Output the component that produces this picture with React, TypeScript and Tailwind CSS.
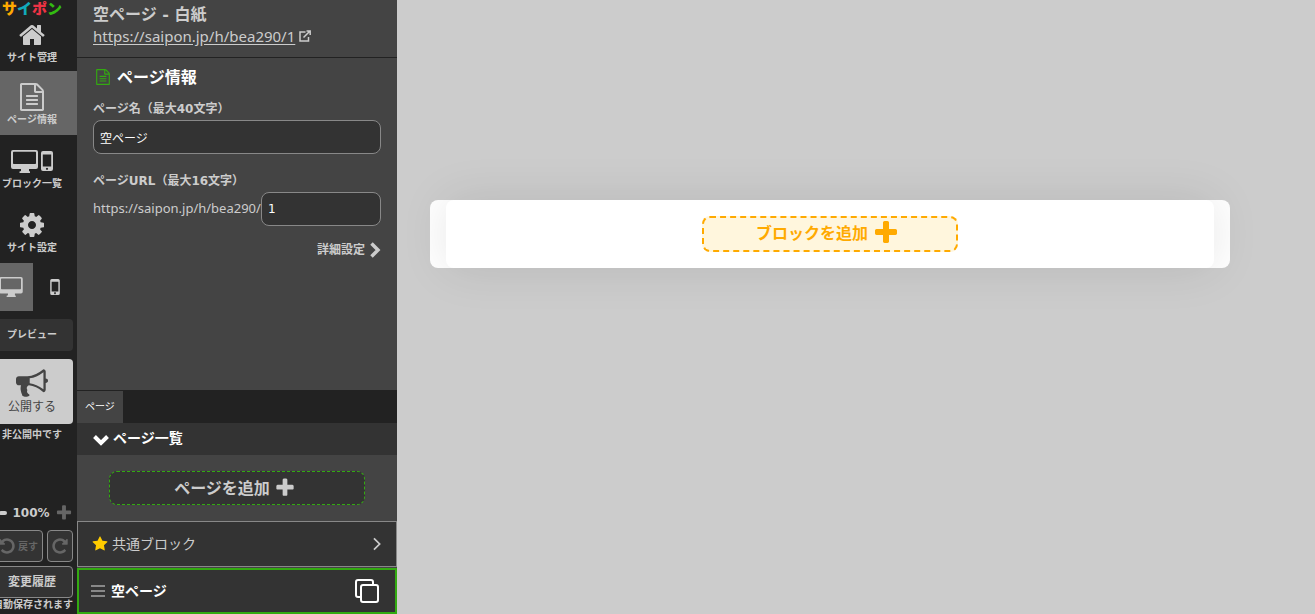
import { useState, type ReactNode } from "react";

const paths = {
  home: "M1472 992v480q0 26-19 45t-45 19h-384v-384h-256v384h-384q-26 0-45-19t-19-45v-480q0-1 .5-3t.5-3l575-474 575 474q1 2 1 6zm223-69l-62 74q-8 9-21 11h-3q-13 0-21-7l-692-577-692 577q-12 8-24 7-13-2-21-11l-62-74q-8-10-7-23.5t11-21.5l719-599q32-26 76-26t76 26l244 204v-195q0-14 9-23t23-9h192q14 0 23 9t9 23v408l219 182q10 8 11 21.5t-7 23.5z",
  file: "M1596 380q28 28 48 76t20 88v1152q0 40-28 68t-68 28h-1344q-40 0-68-28t-28-68v-1600q0-40 28-68t68-28h896q40 0 88 20t76 48zm-444-244v376h376q-10-29-22-41l-313-313q-12-12-41-22zm384 1528v-1024h-416q-40 0-68-28t-28-68v-416h-768v1536h1280zm-1024-864q0-14 9-23t23-9h704q14 0 23 9t9 23v64q0 14-9 23t-23 9h-704q-14 0-23-9t-9-23v-64zm736 224q14 0 23 9t9 23v64q0 14-9 23t-23 9h-704q-14 0-23-9t-9-23v-64q0-14 9-23t23-9h704zm0 256q14 0 23 9t9 23v64q0 14-9 23t-23 9h-704q-14 0-23-9t-9-23v-64q0-14 9-23t23-9h704z",
  cog: "M1152 896q0-106-75-181t-181-75-181 75-75 181 75 181 181 75 181-75 75-181zm512-109v222q0 12-8 23t-20 13l-185 28q-19 54-39 91 35 50 107 138 10 12 10 25t-9 23q-27 37-99 108t-94 71q-12 0-26-9l-138-108q-44 23-91 38-16 136-29 186-7 28-36 28h-222q-14 0-24.5-8.5t-11.5-21.5l-28-184q-49-16-90-37l-141 107q-10 9-25 9-14 0-25-11-126-114-165-168-7-10-7-23 0-12 8-23 15-21 51-66.5t54-70.5q-27-50-41-99l-183-27q-13-2-21-12.5t-8-23.5v-222q0-12 8-23t19-13l186-28q14-46 39-92-40-57-107-138-10-12-10-24 0-10 9-23 26-36 98.5-107.5t94.5-71.5q13 0 26 10l138 107q44-23 91-38 16-136 29-186 7-28 36-28h222q14 0 24.5 8.5t11.5 21.5l28 184q49 16 90 37l142-107q9-9 24-9 13 0 25 10 129 119 165 170 7 8 7 22 0 12-8 23-15 21-51 66.5t-54 70.5q26 50 41 98l183 28q13 2 21 12.5t8 23.5z",
  horn: "M1664 640q53 0 90.5 37.5t37.5 90.5-37.5 90.5-90.5 37.5v384q0 52-38 90t-90 38q-417-347-812-380-58 19-91 66t-31 100.5 40 92.5q-20 33-23 65.5t6 58 33.5 55 48 50 61.5 50.5q-29 58-111.5 83t-168.5 11.5-132-55.5q-7-23-29.5-87.5t-32-94.5-23-89-15-101 3.5-98.5 22-110.5h-122q-66 0-113-47t-47-113v-192q0-66 47-113t113-47h480q435 0 896-384 52 0 90 38t38 90v384zm-128 604v-954q-394 302-768 343v270q377 42 768 341z",
  plus: "M1600 736v192q0 40-28 68t-68 28h-416v416q0 40-28 68t-68 28h-192q-40 0-68-28t-28-68v-416h-416q-40 0-68-28t-28-68v-192q0-40 28-68t68-28h416v-416q0-40 28-68t68-28h192q40 0 68 28t28 68v416h416q40 0 68 28t28 68z",
  redo: "M1664 256v448q0 26-19 45t-45 19h-448q-42 0-59-40-17-39 14-69l138-138q-148-137-349-137-104 0-198.5 40.5t-163.5 109.5-109.5 163.5-40.5 198.5 40.5 198.5 109.5 163.5 163.5 109.5 198.5 40.5q119 0 225-52t179-147q7-10 23-12 15 0 25 9l137 138q9 8 9.5 20.5t-7.5 22.5q-109 132-264 204.5t-327 72.5q-156 0-298-61t-245-164-164-245-61-298 61-298 164-245 245-164 298-61q147 0 284.5 55.5t244.5 156.5l130-129q29-31 70-14 39 17 39 59z",
  star: "M1728 647q0 22-26 48l-363 354 86 500q1 7 1 20 0 21-10.5 35.5t-30.5 14.5q-19 0-40-12l-449-236-449 236q-22 12-40 12-21 0-31.5-14.5t-10.5-35.5q0-6 2-20l86-500-364-354q-25-27-25-48 0-37 56-46l502-73 225-455q19-41 49-41t49 41l225 455 502 73q56 9 56 46z",
};

function Icon({ name, className }: { name: keyof typeof paths; className: string }) {
  return (
    <svg viewBox="0 0 1792 1792" fill="currentColor" aria-hidden="true" className={`shrink-0 ${className}`}>
      <path d={paths[name]} />
    </svg>
  );
}

function Monitor({ className }: { className: string }) {
  return (
    <svg viewBox="0 0 27 23" fill="currentColor" aria-hidden="true" className={`shrink-0 ${className}`}>
      <path
        fillRule="evenodd"
        d="M2 0h23a2 2 0 0 1 2 2v15a2 2 0 0 1-2 2h-7v2l1 .5V23H8.500v-1.500L10 21v-2H2a2 2 0 0 1-2-2V2a2 2 0 0 1 2-2zM2.700 1.800a1 1 0 0 0-.7.8V13q0 1 .7 1h21.600q.7 0 .7-1V2.600q0-.8-.7-.8z"
      />
    </svg>
  );
}

function Phone({ className }: { className: string }) {
  return (
    <svg viewBox="0 0 12 20" fill="currentColor" aria-hidden="true" className={`shrink-0 ${className}`}>
      <path
        fillRule="evenodd"
        d="M2 0h8a2 2 0 0 1 2 2v16a2 2 0 0 1-2 2H2a2 2 0 0 1-2-2V2a2 2 0 0 1 2-2zM1.800 3.500v12h8.400v-12zM6 16.700a1.100 1.100 0 1 0 .01 0z"
      />
    </svg>
  );
}

function Chevron({ className, width }: { className: string; width: number }) {
  return (
    <svg viewBox="0 0 10 16" fill="none" stroke="currentColor" strokeWidth={width} aria-hidden="true" className={`shrink-0 ${className}`}>
      <path d="M1.500 1.500 8 8l-6.500 6.500" />
    </svg>
  );
}

function NavItem({ label, icon, active, first }: { label: string; icon: ReactNode; active?: boolean; first?: boolean }) {
  return (
    <button
      type="button"
      className={`flex w-full flex-col items-center pr-1 text-[10px] leading-4 font-bold ${first ? "h-14 pt-1.5" : "h-16 pt-3"} ${active ? "bg-[#666]" : ""}`}
    >
      <span className="flex h-7 items-center justify-center gap-[3px]">{icon}</span>
      {label}
    </button>
  );
}

function Sidebar() {
  return (
    <aside className="w-[77px] shrink-0 overflow-hidden bg-[#222]">
      <div className="-ml-[9px] flex h-full flex-col">
        <div className="flex h-[15px] justify-center pr-1 text-[15px] leading-4 font-black">
          <span className="text-[#fa0]">サ</span>
          <span className="text-[#1ab]">イ</span>
          <span className="text-[#e34]">ポ</span>
          <span className="text-[#3b1]">ン</span>
        </div>
        <nav>
          <NavItem first label="サイト管理" icon={<Icon name="home" className="size-7" />} />
          <NavItem active label="ページ情報" icon={<Icon name="file" className="size-7" />} />
          <NavItem
            label="ブロック一覧"
            icon={
              <>
                <Monitor className="h-[23px] w-[27px]" />
                <Phone className="h-5 w-3" />
              </>
            }
          />
          <NavItem label="サイト設定" icon={<Icon name="cog" className="size-7" />} />
        </nav>
        <div className="flex h-12">
          <button type="button" aria-label="パソコン表示" className="flex w-[42px] items-center bg-[#666] pl-2">
            <Monitor className="h-5 w-6" />
          </button>
          <button type="button" aria-label="スマホ表示" className="flex flex-1 items-center justify-center">
            <Phone className="h-4 w-2.5" />
          </button>
        </div>
        <button type="button" className="mt-2 mr-1 h-8 rounded bg-[#333] pb-0.5 text-[10px] font-bold">
          プレビュー
        </button>
        <button type="button" className="mt-2 mr-1 flex h-[65px] flex-col items-center rounded bg-[#ccc] pt-2 text-xs leading-4 text-[#444]">
          <Icon name="horn" className="size-8" />
          公開する
        </button>
        <p className="mr-1 text-center text-[10px] leading-5 font-bold">非公開中です</p>

        <div className="mt-auto mr-1 mb-2 flex h-[18px] items-center justify-between pl-2">
          <button type="button" aria-label="縮小" className="h-1 w-2 rounded-xs bg-[#ccc]" />
          <span className="font-['DejaVu_Sans',sans-serif] text-xs font-bold">100%</span>
          <button type="button" aria-label="拡大" className="text-[#666]">
            <Icon name="plus" className="size-[18px]" />
          </button>
        </div>
        <div className="mr-1 flex h-8 gap-1 text-[#666]">
          <button type="button" className="flex flex-1 items-center justify-end gap-0.5 rounded border border-[#888] bg-[#333] pr-1 text-[10px] font-bold">
            <Icon name="redo" className="size-[18px] -scale-x-100" />
            戻す
          </button>
          <button type="button" aria-label="やり直す" className="flex w-[26px] items-center justify-center rounded border border-[#888] bg-[#333]">
            <Icon name="redo" className="size-[18px]" />
          </button>
        </div>
        <button type="button" className="mt-1 mr-1 h-8 rounded border border-[#888] bg-[#333] text-xs font-bold">
          変更履歴
        </button>
        <p className="mr-1 mb-1 text-right text-[10px] leading-3 font-bold whitespace-nowrap">自動保存されます</p>
      </div>
    </aside>
  );
}

const field = "h-[34px] min-w-0 rounded-lg border border-[#888] bg-[#333] px-1.5 text-xs text-white outline-none";
const wide = "font-['DejaVu_Sans','Noto_Sans_CJK_JP',sans-serif]";

function PageInfo() {
  const [name, setName] = useState("空ページ");
  const [slug, setSlug] = useState("1");
  return (
    <section className="min-h-0 flex-1 px-4 pt-[7px]">
      <h2 className="flex h-6 items-center gap-1.5 text-base leading-6 font-bold text-white">
        <Icon name="file" className="ml-0.5 size-4 text-[#3a1]" />
        ページ情報
      </h2>
      <label htmlFor="page-name" className={`mt-2.5 block pb-px text-xs leading-5 font-bold ${wide}`}>
        ページ名（最大40文字）
      </label>
      <input id="page-name" value={name} onChange={(e) => setName(e.target.value)} className={`${field} block w-full ${wide}`} />
      <label htmlFor="page-url" className={`mt-4 block pt-px pb-px text-xs leading-5 font-bold ${wide}`}>
        ページURL（最大16文字）
      </label>
      <div className="flex items-center">
        <span className="text-[13px]">https://saipon.jp/h/bea290/</span>
        <input id="page-url" value={slug} onChange={(e) => setSlug(e.target.value)} className={`${field} flex-1 ${wide}`} />
      </div>
      <button type="button" className="mt-3.5 ml-auto flex items-center gap-1 text-xs leading-5 font-bold">
        詳細設定
        <Chevron width={3.5} className="h-4 w-3" />
      </button>
    </section>
  );
}

function PageList() {
  return (
    <section>
      <div className="flex h-[33px] border-t border-[#222] bg-[#222]">
        <button type="button" className="bg-[#444] px-2 pb-0.5 text-[10px] text-white">
          ページ
        </button>
      </div>
      <h2 className="flex h-8 items-center gap-1 bg-[#333] px-4 pb-0.5 text-sm font-bold text-white">
        <Chevron width={4} className="mt-1 h-4 w-4 rotate-90" />
        ページ一覧
      </h2>
      <div className="px-8 py-4">
        <button type="button" className="flex h-[34px] w-full items-center justify-center gap-1 rounded-lg border border-dashed border-[#3a1] bg-[#333] pr-1 font-bold">
          ページを追加
          <Icon name="plus" className="size-[22px]" />
        </button>
      </div>
      <ul className="flex flex-col gap-px">
        <li>
          <button type="button" className="flex h-[46px] w-full items-center gap-1 border border-[#888] bg-[#333] px-3.5 text-sm">
            <Icon name="star" className="size-4 text-[#fc0]" />
            共通ブロック
            <Chevron width={2} className="ml-auto h-3.5 w-2.5" />
          </button>
        </li>
        <li className="flex h-[46px] items-center border-2 border-[#3a1] bg-[#333] px-3 text-sm font-bold text-white">
          <svg viewBox="0 0 14 12" fill="#888" aria-hidden="true" className="mr-1.5 h-3 w-3.5">
            <path d="M0 0h14v2H0zM0 5h14v2H0zM0 10h14v2H0z" />
          </svg>
          空ページ
          <button type="button" aria-label="ページを複製" className="ml-auto mr-1">
            <svg viewBox="0 0 24 24" fill="none" stroke="currentColor" strokeWidth="2" aria-hidden="true" className="size-6">
              <rect x="6" y="6" width="17" height="17" rx="2" />
              <path d="M6 18H3a2 2 0 0 1-2-2V3a2 2 0 0 1 2-2h13a2 2 0 0 1 2 2v3" />
            </svg>
          </button>
        </li>
      </ul>
    </section>
  );
}

export default function App() {
  return (
    <div className="flex h-screen overflow-hidden bg-[#ccc] font-['Noto_Sans','Noto_Sans_CJK_JP',sans-serif] text-[#ccc]">
      <Sidebar />
      <div className="flex w-80 shrink-0 flex-col bg-[#444]">
        <header className="border-b border-[#222] px-4 pt-1 pb-[11px]">
          <h1 className={`text-base leading-[22px] font-bold ${wide}`}>空ページ - 白紙</h1>
          <a href="https://saipon.jp/h/bea290/1" className="flex items-center gap-1 text-[15px] leading-5">
            <span className="underline underline-offset-2">https://saipon.jp/h/bea290/1</span>
            <svg viewBox="0 0 12 12" fill="none" stroke="currentColor" strokeWidth="1.500" aria-hidden="true" className="size-3">
              <path d="M6.500 2H1v9h8.500V7M4.500 7.500 10.500 1.500M7.500 1H11.200v4" />
            </svg>
          </a>
        </header>
        <PageInfo />
        <PageList />
      </div>
      <main className="min-w-0 flex-1 pt-[200px] pr-[85px] pl-[33px]">
        <div className="rounded-lg bg-white px-4">
          <div className="flex justify-center rounded-lg bg-white p-4 shadow-[0_0_48px_rgba(0,0,0,0.1)]">
            <button type="button" className="flex h-9 w-64 items-center justify-center gap-1 rounded-lg border-2 border-dashed border-[#fa0] bg-[#fff6dd] pr-1 pb-0.5 font-bold text-[#fa0]">
              ブロックを追加
              <Icon name="plus" className="size-7" />
            </button>
          </div>
        </div>
      </main>
    </div>
  );
}
